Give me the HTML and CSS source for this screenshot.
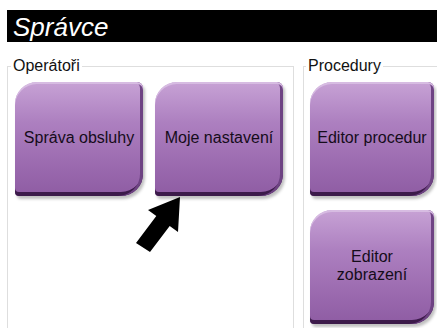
FILE: index.html
```html
<!DOCTYPE html>
<html>
	<head>
		<meta charset="UTF-8">
		<title>Správce</title>
		<link rel="stylesheet" href="styles.css">
	</head>
	<body>
		<div class="title">Správce</div>
		<div class="groups">
			<fieldset class="group group-ops">
				<legend>Operátoři</legend>
				<div class="row">
					<div class="btn wide">Správa obsluhy</div>
					<div class="btn wide">Moje nastavení</div>
				</div>
			</fieldset>
			<fieldset class="group group-proc">
				<legend>Procedury</legend>
				<div class="col">
					<div class="btn">Editor procedur</div>
					<div class="btn">Editor<br>zobrazení</div>
				</div>
			</fieldset>
		</div>
		<!-- šipka na tlačítko -->
		<svg class="arrow" width="60" height="70" viewBox="0 0 60 70">
			<polygon points="50,7 48,42 39.7,35.9 20,62 6,53 26.3,26.1 18,20" fill="#000"/>
		</svg>
	</body>
</html>
```

FILE: styles.css
```css
html,
body {
	margin: 0;
	height: 100%;
	overflow: hidden;
	background: #fff;
}

body {
	font-family: "Liberation Sans", Arial, sans-serif;
	color: #150c1a;
	position: relative;
}

.title {
	margin: 10px 0 0 7px;
	height: 32px;
	padding-left: 6px;
	background: #000;
	color: #fff;
	font-style: italic;
	font-size: 26px;
	line-height: 34px;
}

.groups {
	display: flex;
	gap: 9px;
	margin: 16px 0 0 7px;
}

.group {
	flex: none;
	margin: 0;
	min-width: 0;
	height: 270px;
	border: 1px solid #dedede;
	border-bottom: none;
	box-sizing: border-box;
}

.group legend {
	padding: 0 2px;
	margin-left: -4px;
	font-size: 16px;
	line-height: 16px;
	color: #111;
}

.group-ops {
	width: 287px;
	padding: 0 9px 0 7px;
}

.group-proc {
	width: 150px;
	padding: 0 0 0 6px;
}

.row {
	display: flex;
	gap: 12px;
	margin-top: 8px;
}

.col {
	display: flex;
	flex-direction: column;
	gap: 14px;
	margin-top: 8px;
}

.btn {
	width: 124px;
	height: 114px;
	box-sizing: border-box;
	display: flex;
	align-items: center;
	justify-content: center;
	text-align: center;
	font-size: 16px;
	line-height: 18px;
	padding-bottom: 2px;
	border-radius: 22px 6px 22px 4px;
	background: linear-gradient(#c7a2d5, #ad80c0 35%, #9a69ae 75%, #8e5ca3);
	box-shadow: inset 0 2px 0 #d7bce2, inset -3px 0 0 #6e4383, inset 0 -4px 0 #3c1a4a, 2px 3px 3px rgba(0, 0, 0, 0.25);
}

.btn.wide {
	width: 128px;
}

.arrow {
	position: absolute;
	left: 130px;
	top: 190px;
}
```
